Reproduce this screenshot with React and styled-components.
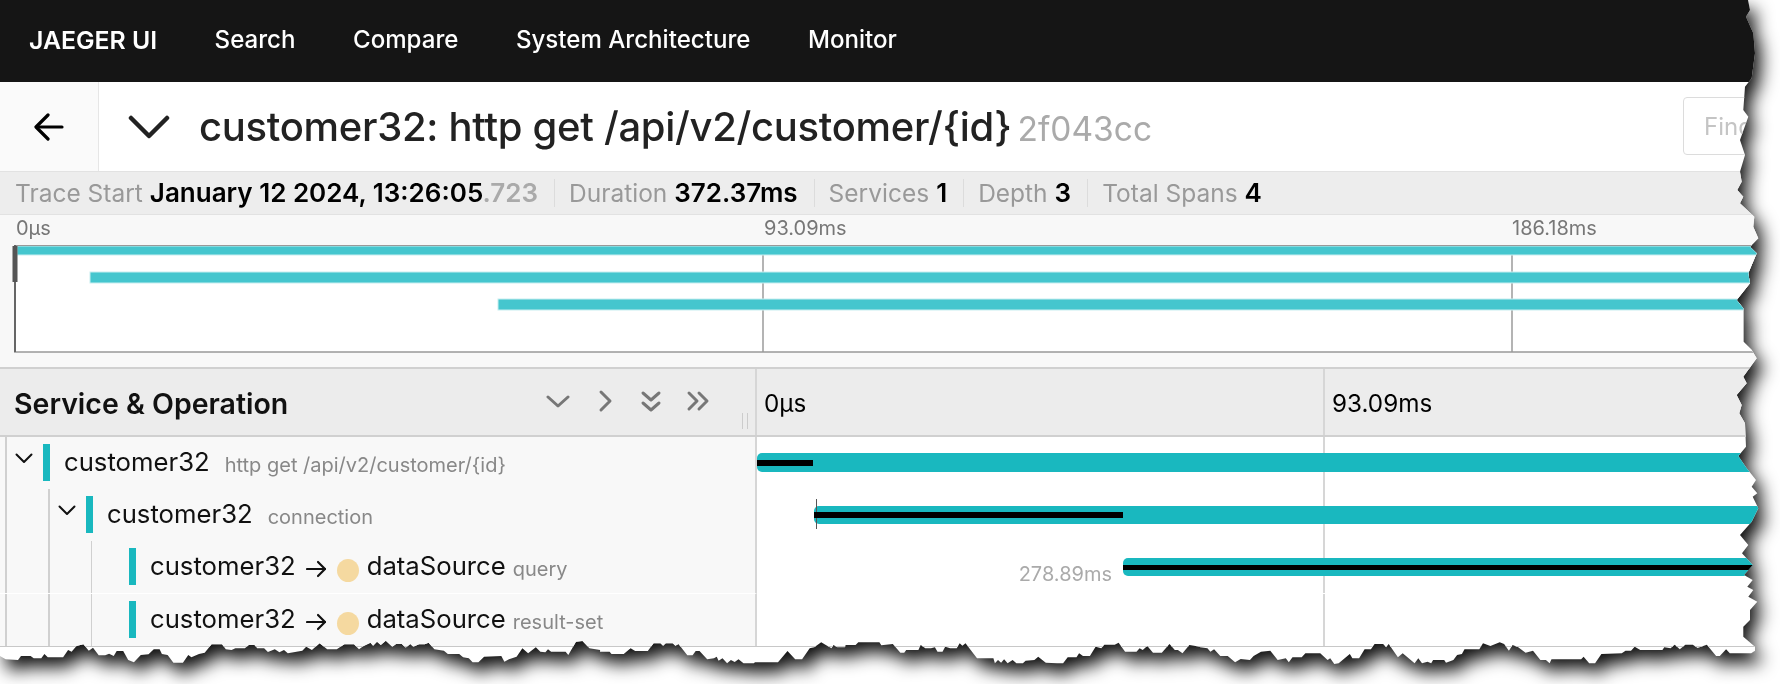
import React from 'react'
import styled, { createGlobalStyle } from 'styled-components'

// torn paper edge, traced from the picture: [x, y] pairs in crop pixels
const trace = (pts, x0, y0, sx, sy) => pts.map(([x, y]) => [x0 + x / sx, y0 + y / sy])

const rightTop = trace([[504,0],[510,30],[498,50],[520,100],[525,160],[515,235],[495,260],[490,330],[505,350],[480,420],[495,465],[480,515],[485,545],[472,570],[490,590],[480,610],[523,650],[520,680],[535,715],[510,740],[530,760],[505,820],[510,850],[470,900],[490,925],[490,1025],[515,1050],[530,1075],[490,1130]], 1580, 0, 3, 3)
const rightBottom = trace([[200,10],[170,45],[185,75],[178,100],[195,130],[198,200],[175,228],[200,265],[228,300],[215,320],[232,340],[218,350],[235,385],[215,425],[180,465],[205,495],[186,520],[218,555],[192,585],[218,600],[202,620],[220,630],[205,650],[232,665],[210,690],[210,720],[190,740],[190,770],[225,800],[225,815]], 1680, 380, 3, 3)
const bottomA = trace([[0,78],[15,88],[47,90],[55,78],[80,78],[88,85],[108,85],[116,72],[125,82],[165,82],[178,60],[187,65],[200,48],[218,43],[232,62],[243,53],[258,76],[275,76],[285,71],[297,78],[305,63],[322,63],[335,90],[350,97],[368,75],[388,73],[402,58],[417,58],[423,72],[438,75],[453,98],[478,98],[492,75],[500,82],[520,72],[535,68],[553,43],[580,43],[590,58],[605,60],[615,55],[640,55],[650,45],[665,45],[672,55],[690,55],[700,66],[718,58],[730,67],[742,60],[752,70],[790,62],[800,50],[815,60],[835,40],[855,58],[880,58],[900,43],[925,43],[938,58],[950,48],[968,38],[975,47],[985,35],[995,45],[1008,32],[1025,50],[1035,42],[1050,42],[1060,53],[1072,42],[1080,50],[1095,43],[1110,43],[1120,38],[1135,58],[1160,62],[1170,72],[1200,72],[1210,82],[1225,85],[1235,97],[1250,97],[1265,80],[1310,78],[1318,95],[1330,88],[1350,80],[1365,55],[1380,70],[1400,52],[1412,65],[1425,67],[1432,58],[1440,65],[1478,65],[1485,75],[1505,35],[1522,33],[1540,55],[1568,60]], 0, 630, 2.613, 3)
const bottomB = trace([[0,65],[25,65],[30,72],[62,72],[80,55],[92,63],[125,63],[140,40],[158,40],[165,47],[172,40],[190,40],[197,47],[205,42],[228,76],[242,76],[250,63],[260,63],[280,88],[298,85],[305,80],[310,92],[320,85],[332,100],[342,90],[352,96],[362,88],[375,100],[402,100],[405,97],[465,97],[490,63],[510,88],[528,88],[548,55],[560,52],[578,37],[590,45],[605,55],[610,45],[620,52],[640,52],[642,45],[668,45],[675,37],[730,37],[735,46],[765,42],[785,68],[795,68],[800,60],[832,60],[838,45],[850,55],[865,55],[875,52],[882,65],[895,65],[902,50],[915,55],[932,55],[940,40],[947,47],[955,40],[985,85],[1028,85],[1032,100],[1040,90],[1048,98],[1056,88],[1065,100],[1078,90],[1088,100],[1105,100],[1112,92],[1135,90],[1145,80],[1165,98],[1195,100],[1210,100],[1222,82],[1245,82],[1252,70],[1262,78],[1280,78],[1295,50],[1310,55],[1318,44],[1345,44],[1355,38],[1372,65],[1402,65],[1410,55],[1418,60],[1430,48],[1445,68],[1468,68],[1488,42],[1502,60],[1510,60],[1522,70],[1540,45],[1568,50]], 600, 630, 2.613, 3)
const bottomC = trace([[0,52],[20,55],[28,65],[38,58],[55,78],[75,78],[95,97],[110,87],[135,90],[145,78],[165,65],[190,62],[210,90],[232,85],[240,97],[250,82],[275,82],[285,70],[325,70],[345,90],[352,85],[363,102],[375,100],[405,72],[412,85],[430,85],[445,58],[462,58],[472,42],[495,42],[503,52],[510,42],[535,82],[548,70],[580,100],[590,85],[600,100],[615,95],[625,100],[630,90],[660,90],[665,98],[685,90],[695,75],[708,72],[715,58],[755,58],[765,40],[785,48],[810,37],[822,42],[835,62],[845,45],[860,52],[880,68],[900,62],[920,90],[935,90],[945,100],[950,88],[1030,88],[1037,80],[1052,100],[1068,100],[1085,72],[1140,70],[1150,62],[1165,62],[1175,50],[1190,60],[1250,60],[1255,52],[1272,55],[1283,44],[1297,58],[1312,44],[1332,44],[1345,54],[1370,44],[1395,78],[1405,78],[1422,58],[1432,70],[1490,70],[1500,62]], 1200, 630, 2.703, 3)

const tornEdge = [
  [0, 0],
  ...rightTop,
  ...rightBottom,
  ...[...bottomA, ...bottomB, ...bottomC].reverse(),
].map(([x, y]) => `${x.toFixed(1)}px ${y.toFixed(1)}px`).join(',')

const GlobalStyle = createGlobalStyle`
  html, body {
    margin: 0;
    background: #fff;
    overflow: hidden;
  }
  body {
    font-family: Inter, "Liberation Sans", sans-serif;
  }
`

const Shadow = styled.div`
  width: 1780px;
  height: 684px;
  filter: drop-shadow(6px 10px 9px rgba(0, 0, 0, 0.95));
`

const Sheet = styled.div`
  width: 1780px;
  height: 684px;
  background: #fff;
  overflow: hidden;
  clip-path: polygon(${tornEdge});
`

const Nav = styled.nav`
  height: 82px;
  background: #151515;
  display: flex;
  align-items: center;
  gap: 57.5px;
  padding: 0 0 3px 29px;
  box-sizing: border-box;
  color: #fff;
  font-size: 24.1px;
`

const NavItem = styled.span`
  font-weight: ${p => (p.$brand ? 600 : 500)};
  font-size: ${p => (p.$brand ? '24.8px' : 'inherit')};
`

const TitleBar = styled.header`
  height: 90px;
  display: flex;
  align-items: stretch;
  border-bottom: 1px solid #e2e2e2;
  box-sizing: border-box;
`

const BackBox = styled.div`
  width: 99px;
  box-sizing: border-box;
  background: #fafafa;
  border-right: 1px solid #e6e6e6;
  display: flex;
  align-items: center;
  justify-content: center;
`

const TitleToggle = styled.div`
  width: 100px;
  display: flex;
  align-items: center;
  justify-content: center;
`

const Title = styled.h1`
  margin: 0;
  align-self: center;
  font-size: 40px;
  font-weight: 500;
  letter-spacing: -0.3px;
  color: #222;
  white-space: nowrap;
`

const TraceHash = styled.small`
  font-size: 33.5px;
  font-weight: 400;
  letter-spacing: 0;
  color: #aaa;
  margin-left: 6px;
`

const FindBox = styled.div`
  width: 97px;
  height: 58px;
  margin: 15px 0 0 auto;
  box-sizing: border-box;
  border: 1px solid #dcdcdc;
  border-radius: 4px;
  padding-left: 20px;
  display: flex;
  align-items: center;
  color: #c4c4c4;
  font-size: 24px;
  flex: none;
  overflow: hidden;
`

const Stats = styled.div`
  height: 43px;
  box-sizing: border-box;
  background: #ededed;
  border-bottom: 1px solid #e2e2e2;
  display: flex;
  align-items: center;
  padding-left: 15px;
  font-size: 24.5px;
  white-space: nowrap;
`

const Stat = styled.span`
  color: #999;
  padding-right: 16px;
  margin-right: 14px;
  border-right: 1px solid ${p => (p.$last ? 'transparent' : '#dcdcdc')};
  line-height: 28px;
`

const StatValue = styled.b`
  color: #000;
  font-size: 26px;
  font-weight: 600;
  margin-left: 7px;
`

const Faded = styled.span`
  color: #aaa;
`

const Minimap = styled.section`
  background: #f8f8f8;
  padding-bottom: 14px;
  border-bottom: 2px solid #d0d0d0;
`

const TickLabels = styled.div`
  height: 30px;
  position: relative;
  color: #777;
  font-size: 20px;
`

const TickLabel = styled.span`
  position: absolute;
  top: 1px;
  left: ${p => p.$x}px;
`

const MinimapGraph = styled.svg`
  display: block;
  margin-left: 12px;
`

const ViewHeader = styled.div`
  height: 66px;
  display: flex;
  background: #ececec;
  border-bottom: 2px solid #d0d0d0;
`

const NameHead = styled.div`
  position: relative;
  width: 757px;
  box-sizing: border-box;
  flex: none;
  display: flex;
  align-items: center;
  padding: 2px 0 0 15px;
  border-right: 2px solid #d6d6d6;
`

const NameTitle = styled.span`
  font-size: 28.5px;
  font-weight: 600;
  color: #111;
  width: 532px;
  margin-left: -1px;
  white-space: nowrap;
`

const HeadIcons = styled.div`
  display: flex;
  align-items: center;
  gap: 23px;
  color: #777;
  margin-bottom: 4px;
`

const Grip = styled.i`
  position: absolute;
  right: 7px;
  bottom: 6px;
  width: 4px;
  height: 16px;
  border-left: 1px solid #ccc;
  border-right: 1px solid #ccc;
`

const TimeHead = styled.div`
  display: flex;
  flex: 1;
`

const TimeCell = styled.div`
  width: ${p => p.$w}px;
  flex: none;
  box-sizing: border-box;
  padding: 2px 0 0 7px;
  display: flex;
  align-items: center;
  font-size: 24.25px;
  color: #000;
  border-right: 2px solid ${p => (p.$line ? '#d6d6d6' : 'transparent')};
`

const Row = styled.div`
  height: ${p => p.$h || 52}px;
  display: flex;
`

const NameCell = styled.div`
  width: 757px;
  flex: none;
  box-sizing: border-box;
  background: #f8f8f8;
  border-right: 2px solid #d6d6d6;
  border-bottom: ${p => (p.$split ? '1px solid #fff' : 'none')};
  padding-left: 5px;
  display: flex;
  align-items: flex-start;
  white-space: nowrap;
`

const Guide = styled.span`
  flex: none;
  width: 43px;
  align-self: stretch;
  box-sizing: border-box;
  border-left: ${p => (p.$thin ? '1px' : '2px')} solid #d0d0d0;
  padding: 16px 0 0 8px;
  color: #111;
`

const ServiceBar = styled.span`
  flex: none;
  width: 7px;
  height: 37px;
  margin: 7px 14px 0 -5px;
  background: #19b8bf;
`

const NameText = styled.span`
  display: flex;
  align-items: baseline;
  line-height: 52px;
  margin-top: -1px;
  font-size: 25.7px;
  color: #111;
`

const ArrowMark = styled.span`
  align-self: center;
  display: flex;
  margin: 4px 10px 0 10px;
`

const PeerDot = styled.span`
  width: 22px;
  height: 23px;
  border-radius: 50%;
  background: #f5d9a0;
  margin-right: 8px;
  align-self: center;
  margin-top: 6px;
`

const OpText = styled.span`
  font-size: 20px;
  color: #888;
  margin-left: ${p => p.$gap}px;
  position: relative;
  top: 1px;
`

const Track = styled.div`
  position: relative;
  flex: 1;
  display: flex;
  align-items: flex-start;
`

const GridLine = styled.span`
  position: absolute;
  top: 0;
  bottom: ${p => (p.$cut ? 1 : 0)}px;
  left: 566px;
  width: 2px;
  background: #d6d6d6;
`

const SpanBar = styled.div`
  position: relative;
  flex: 1;
  height: ${p => p.$h}px;
  margin-left: ${p => p.$left}px;
  margin-top: ${p => p.$top}px;
  background: #19b8bf;
  border-radius: 5px 0 0 5px;
`

const SelfTime = styled.span`
  position: absolute;
  left: 0;
  top: ${p => p.$top}px;
  height: ${p => p.$h}px;
  width: ${p => p.$w}px;
  background: #000;
`

const StartTick = styled.span`
  position: absolute;
  left: 2px;
  top: -7px;
  bottom: -5px;
  width: 1px;
  background: #555;
`

const SpanLabel = styled.span`
  width: 355px;
  flex: none;
  text-align: right;
  font-size: 20px;
  color: #aaa;
  line-height: 26px;
  margin: 20px 11px 0 0;
`

const ViewBottom = styled.div`
  height: 1px;
  background: #c8c8c8;
`

const TitleChevron = () => (
  <svg width="42" height="24" viewBox="0 0 42 24" fill="none" stroke="#222" strokeWidth="4.5" strokeLinecap="round" strokeLinejoin="round">
    <polyline points="3,3 21,21 39,3" />
  </svg>
)

const BackArrow = () => (
  <svg width="30" height="28" viewBox="0 0 30 28" fill="none" stroke="#000" strokeWidth="3.2" strokeLinecap="round" strokeLinejoin="round">
    <line x1="3" y1="14" x2="28" y2="14" />
    <polyline points="14,2 2,14 14,26" />
  </svg>
)

const Chevron = ({ points, w = 24, h = 24 }) => (
  <svg width={w} height={h} viewBox={`0 0 ${w} ${h}`} fill="none" stroke="currentColor" strokeWidth="3" strokeLinecap="round" strokeLinejoin="round">
    {points.map(p => <polyline key={p} points={p} />)}
  </svg>
)

const RowToggle = () => (
  <svg width="18" height="11" viewBox="0 0 18 11" fill="none" stroke="#111" strokeWidth="2" strokeLinecap="round" strokeLinejoin="round" style={{ display: 'block' }}>
    <polyline points="1.5,1.5 9,9 16.5,1.5" />
  </svg>
)

const SmallArrow = () => (
  <svg width="21" height="18" viewBox="0 0 21 18" fill="none" stroke="#111" strokeWidth="2.2" strokeLinecap="round" strokeLinejoin="round">
    <line x1="1" y1="9" x2="19" y2="9" />
    <polyline points="12,2 19,9 12,16" />
  </svg>
)

const bars = [
  { x: 5, y: 1, h: 9 },
  { x: 78, y: 27, h: 11 },
  { x: 486, y: 54, h: 11 },
]

export default function App() {
  return (
    <>
      <GlobalStyle />
      <Shadow>
        <Sheet>
          <Nav>
            <NavItem $brand>JAEGER UI</NavItem>
            <NavItem>Search</NavItem>
            <NavItem>Compare</NavItem>
            <NavItem>System Architecture</NavItem>
            <NavItem>Monitor</NavItem>
          </Nav>
          <TitleBar>
            <BackBox><BackArrow /></BackBox>
            <TitleToggle><TitleChevron /></TitleToggle>
            <Title>
              customer32: http get /api/v2/customer/{'{id}'}
              <TraceHash>2f043cc</TraceHash>
            </Title>
            <FindBox>Find...</FindBox>
          </TitleBar>
          <Stats>
            <Stat>Trace Start<StatValue>January 12 2024, 13:26:05<Faded>.723</Faded></StatValue></Stat>
            <Stat>Duration<StatValue>372.37ms</StatValue></Stat>
            <Stat>Services<StatValue>1</StatValue></Stat>
            <Stat>Depth<StatValue>3</StatValue></Stat>
            <Stat $last>Total Spans<StatValue>4</StatValue></Stat>
          </Stats>
          <Minimap>
            <TickLabels>
              <TickLabel $x={16}>0µs</TickLabel>
              <TickLabel $x={764}>93.09ms</TickLabel>
              <TickLabel $x={1512}>186.18ms</TickLabel>
            </TickLabels>
            <MinimapGraph width="1768" height="108" viewBox="0 0 1768 108">
              <rect x="2" y="0" width="1766" height="107" fill="#fff" />
              <line x1="751" y1="0" x2="751" y2="107" stroke="#b4b4b4" strokeWidth="2" />
              <line x1="1500" y1="0" x2="1500" y2="107" stroke="#b4b4b4" strokeWidth="2" />
              {bars.map(b => (
                <rect key={b.x} x={b.x} y={b.y} width={1768 - b.x} height={b.h} fill="#45c6ce" stroke="#c8eef0" strokeWidth="1" />
              ))}
              <line x1="2" y1="0.5" x2="1768" y2="0.5" stroke="#999" />
              <line x1="2" y1="107" x2="1768" y2="107" stroke="#999" strokeWidth="1.5" />
              <line x1="3" y1="0" x2="3" y2="107" stroke="#666" strokeWidth="2" />
              <rect x="0.5" y="1" width="5" height="36" fill="#555" />
            </MinimapGraph>
          </Minimap>
          <ViewHeader>
            <NameHead>
              <NameTitle>Service &amp; Operation</NameTitle>
              <HeadIcons>
                <Chevron points={['2,8 12,17 22,8']} />
                <Chevron points={['8,3 17,12 8,21']} />
                <Chevron w={22} points={['3,4 11,11 19,4', '3,14 11,21 19,14']} />
                <Chevron w={26} points={['4,4 12,12 4,20', '14,4 22,12 14,20']} />
              </HeadIcons>
              <Grip />
            </NameHead>
            <TimeHead>
              <TimeCell $w={568} $line>0µs</TimeCell>
              <TimeCell $w={400}>93.09ms</TimeCell>
            </TimeHead>
          </ViewHeader>
          <Row>
            <NameCell>
              <Guide><RowToggle /></Guide>
              <ServiceBar />
              <NameText>customer32<OpText $gap={15}>http get /api/v2/customer/{'{id}'}</OpText></NameText>
            </NameCell>
            <Track>
              <GridLine />
              <SpanBar $left={0} $top={16} $h={19}>
                <SelfTime $top={7} $h={6} $w={56} />
              </SpanBar>
            </Track>
          </Row>
          <Row>
            <NameCell>
              <Guide />
              <Guide><RowToggle /></Guide>
              <ServiceBar />
              <NameText>customer32<OpText $gap={15}>connection</OpText></NameText>
            </NameCell>
            <Track>
              <GridLine />
              <SpanBar $left={57} $top={17} $h={18}>
                <StartTick />
                <SelfTime $top={6} $h={6} $w={309} />
              </SpanBar>
            </Track>
          </Row>
          <Row $h={53}>
            <NameCell $split>
              <Guide />
              <Guide />
              <Guide $thin />
              <ServiceBar />
              <NameText>
                customer32
                <ArrowMark><SmallArrow /></ArrowMark>
                <PeerDot />
                dataSource
                <OpText $gap={7}>query</OpText>
              </NameText>
            </NameCell>
            <Track>
              <GridLine $cut />
              <SpanLabel>278.89ms</SpanLabel>
              <SpanBar $left={0} $top={17} $h={18}>
                <SelfTime $top={7} $h={5} $w={700} />
              </SpanBar>
            </Track>
          </Row>
          <Row>
            <NameCell>
              <Guide />
              <Guide />
              <Guide $thin />
              <ServiceBar />
              <NameText>
                customer32
                <ArrowMark><SmallArrow /></ArrowMark>
                <PeerDot />
                dataSource
                <OpText $gap={7}>result-set</OpText>
              </NameText>
            </NameCell>
            <Track>
              <GridLine />
            </Track>
          </Row>
          <ViewBottom />
        </Sheet>
      </Shadow>
    </>
  )
}
